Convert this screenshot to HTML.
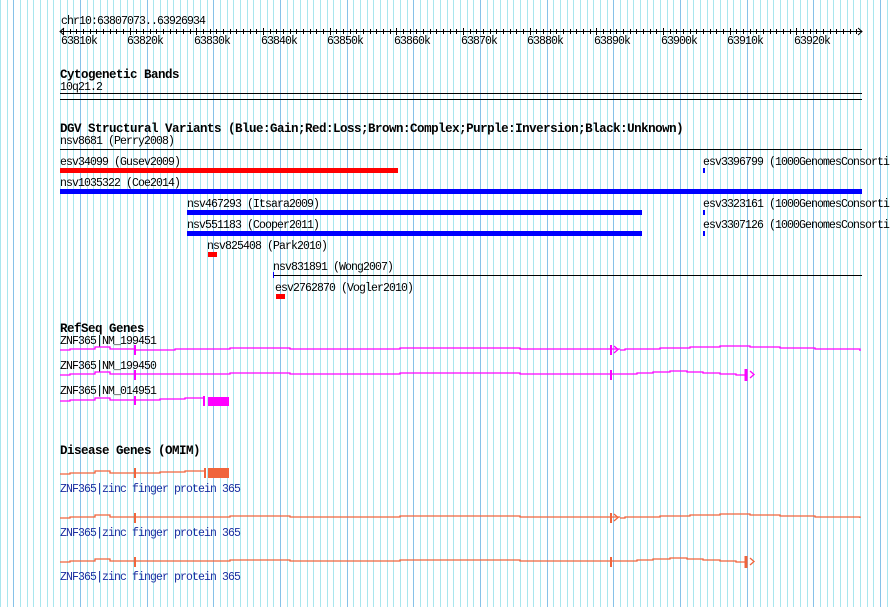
<!DOCTYPE html>
<html><head><meta charset="utf-8"><style>
html,body{margin:0;padding:0;background:#fff;}
#c{position:relative;width:890px;height:607px;overflow:hidden;background:#fff;}
svg{position:absolute;left:0;top:0}
text{font-family:"Liberation Mono",monospace;font-size:11.5px;letter-spacing:-0.9px;fill:#000}
.b{font-weight:bold;font-size:12.5px;letter-spacing:-0.5px}
.z{fill:#1a2ea0}
</style></head><body><div id="c">
<svg width="890" height="607" xmlns="http://www.w3.org/2000/svg">
<defs>
<pattern id="g" x="80" y="0" width="200" height="607" patternUnits="userSpaceOnUse">
<path fill="none" stroke="#a8e6ee" stroke-width="1" d="M7.5 0V607M13.5 0V607M20.5 0V607M27.5 0V607M33.5 0V607M40.5 0V607M47.5 0V607M53.5 0V607M60.5 0V607M73.5 0V607M80.5 0V607M87.5 0V607M93.5 0V607M100.5 0V607M107.5 0V607M113.5 0V607M120.5 0V607M127.5 0V607M140.5 0V607M147.5 0V607M153.5 0V607M160.5 0V607M167.5 0V607M173.5 0V607M180.5 0V607M187.5 0V607M193.5 0V607"/>
<path fill="none" stroke="#86c2e8" stroke-width="1" d="M0.5 0V607M67.5 0V607M133.5 0V607"/>
</pattern>
</defs>
<rect x="0" y="0" width="890" height="607" fill="url(#g)"/>

<text x="61" y="24">chr10:63807073..63926934</text>
<line x1="60" y1="31.5" x2="862" y2="31.5" stroke="#000"/>
<path d="M64 28 L60 31.5 L64 35 M858 28 L862 31.5 L858 35" stroke="#000" fill="none"/>
<g>
<text x="61" y="44">63810k</text><text x="127" y="44">63820k</text><text x="194" y="44">63830k</text><text x="261" y="44">63840k</text><text x="327" y="44">63850k</text><text x="394" y="44">63860k</text><text x="461" y="44">63870k</text><text x="527" y="44">63880k</text><text x="594" y="44">63890k</text><text x="661" y="44">63900k</text><text x="727" y="44">63910k</text><text x="794" y="44">63920k</text>
</g>

<text class="b" x="60" y="78">Cytogenetic Bands</text>
<text x="60" y="90">10q21.2</text>
<line x1="60" y1="93.5" x2="862" y2="93.5" stroke="#000"/>
<line x1="60" y1="99.5" x2="862" y2="99.5" stroke="#000"/>

<text class="b" x="60" y="132">DGV Structural Variants (Blue:Gain;Red:Loss;Brown:Complex;Purple:Inversion;Black:Unknown)</text>
<text x="60" y="144">nsv8681 (Perry2008)</text>
<line x1="60" y1="149.5" x2="862" y2="149.5" stroke="#000"/>
<text x="60" y="165">esv34099 (Gusev2009)</text>
<rect x="60" y="168" width="338" height="5" fill="#f00"/>
<text x="703" y="165">esv3396799 (1000GenomesConsortium)</text>
<rect x="703" y="168" width="2" height="5" fill="#00f"/>
<text x="60" y="186">nsv1035322 (Coe2014)</text>
<rect x="60" y="189" width="802" height="5" fill="#00f"/>
<text x="187" y="207">nsv467293 (Itsara2009)</text>
<rect x="187" y="210" width="455" height="5" fill="#00f"/>
<text x="703" y="207">esv3323161 (1000GenomesConsortium)</text>
<rect x="703" y="210" width="2" height="5" fill="#00f"/>
<text x="187" y="228">nsv551183 (Cooper2011)</text>
<rect x="187" y="231" width="455" height="5" fill="#00f"/>
<text x="703" y="228">esv3307126 (1000GenomesConsortium)</text>
<rect x="703" y="231" width="2" height="5" fill="#00f"/>
<text x="207" y="249">nsv825408 (Park2010)</text>
<rect x="208" y="252" width="9" height="5" fill="#f00"/>
<text x="273" y="270">nsv831891 (Wong2007)</text>
<line x1="273" y1="275.5" x2="862" y2="275.5" stroke="#000"/>
<line x1="273.5" y1="272" x2="273.5" y2="278" stroke="#00f"/>
<text x="275" y="291">esv2762870 (Vogler2010)</text>
<rect x="276" y="294" width="9" height="5" fill="#f00"/>

<text class="b" x="60" y="332">RefSeq Genes</text>
<text x="60" y="344">ZNF365|NM_199451</text>
<text x="60" y="369">ZNF365|NM_199450</text>
<text x="60" y="394">ZNF365|NM_014951</text>
<g fill="none" stroke="#f0f" stroke-width="1.3">
<path d="M60 350 H70 V349 H95 V347 H110 V349 H135 M135 350 H175 V349 H230 V348 H290 V349 H400 V348 H520 V349 H610 H620 M620 350 H625 V349 H660 V348 H690 V347 H720 V346 H750 V347 H780 V348 H815 V349 H860 V351"/>
<path d="M135 345 V355 M611 345 V355" stroke-width="2"/>
<path d="M614 346 L618 349.5 L614 353"/>
<path d="M60 375 H70 V374 H95 V372 H110 V374 H135 H175 V374 H230 V373 H290 V374 H400 V373 H520 V374 H610 H620 V374 H637 V373 H653 V372 H670 V371 H687 V372 H703 V373 H720 V374 H736 V375 H746"/>
<path d="M135 370 V380 M611 370 V380" stroke-width="2"/>
<path d="M746 369 V381" stroke-width="3"/>
<path d="M750 371 L754 374.5 L750 378"/>
<path d="M60 401 H70 V400 H95 V398 H110 V400 H135 H160 V399 H185 V398 H205"/>
<path d="M135 396 V405 M204 396 V406" stroke-width="2"/>
</g>
<rect x="208" y="397" width="21" height="9" fill="#f0f"/>

<text class="b" x="60" y="454">Disease Genes (OMIM)</text>
<g fill="none" stroke="#f0643c" stroke-width="1.3">
<path d="M60 474 H70 V473 H95 V471 H110 V473 H135 H160 V472 H185 V471 H205"/>
<path d="M135 468 V478 M205 468 V478" stroke-width="2"/>
<path d="M60 518 H70 V517 H95 V515 H110 V517 H135 H175 V517 H230 V516 H290 V517 H400 V516 H520 V517 H610 H620 M620 518 H625 V517 H660 V516 H690 V515 H720 V514 H750 V515 H780 V516 H815 V517 H860 V518"/>
<path d="M135 513 V523 M611 513 V523" stroke-width="2"/>
<path d="M614 514 L618 517.5 L614 521"/>
<path d="M60 562 H70 V561 H95 V559 H110 V561 H135 H175 V561 H230 V560 H290 V561 H400 V560 H520 V561 H610 H620 V561 H637 V560 H653 V559 H670 V558 H687 V559 H703 V560 H720 V561 H736 V562 H746"/>
<path d="M135 557 V567 M611 557 V567" stroke-width="2"/>
<path d="M746 556 V568" stroke-width="3"/>
<path d="M750 558 L754 561.5 L750 565"/>
</g>
<rect x="208" y="468" width="21" height="10" fill="#f0643c"/>
<text class="z" x="60" y="492">ZNF365|zinc finger protein 365</text>
<text class="z" x="60" y="536">ZNF365|zinc finger protein 365</text>
<text class="z" x="60" y="580">ZNF365|zinc finger protein 365</text>

<g stroke="#000">
<path d="M63.5 28V35M130.5 28V35M196.5 28V35M263.5 28V35M330.5 28V35M396.5 28V35M463.5 28V35M530.5 28V35M596.5 28V35M663.5 28V35M730.5 28V35M796.5 28V35M70.5 29V34M76.5 29V34M83.5 29V34M90.5 29V34M96.5 29V34M103.5 29V34M110.5 29V34M116.5 29V34M123.5 29V34M136.5 29V34M143.5 29V34M150.5 29V34M156.5 29V34M163.5 29V34M170.5 29V34M176.5 29V34M183.5 29V34M190.5 29V34M203.5 29V34M210.5 29V34M216.5 29V34M223.5 29V34M230.5 29V34M236.5 29V34M243.5 29V34M250.5 29V34M256.5 29V34M270.5 29V34M276.5 29V34M283.5 29V34M290.5 29V34M296.5 29V34M303.5 29V34M310.5 29V34M316.5 29V34M323.5 29V34M336.5 29V34M343.5 29V34M350.5 29V34M356.5 29V34M363.5 29V34M370.5 29V34M376.5 29V34M383.5 29V34M390.5 29V34M403.5 29V34M410.5 29V34M416.5 29V34M423.5 29V34M430.5 29V34M436.5 29V34M443.5 29V34M450.5 29V34M456.5 29V34M470.5 29V34M476.5 29V34M483.5 29V34M490.5 29V34M496.5 29V34M503.5 29V34M510.5 29V34M516.5 29V34M523.5 29V34M536.5 29V34M543.5 29V34M550.5 29V34M556.5 29V34M563.5 29V34M570.5 29V34M576.5 29V34M583.5 29V34M590.5 29V34M603.5 29V34M610.5 29V34M616.5 29V34M623.5 29V34M630.5 29V34M636.5 29V34M643.5 29V34M650.5 29V34M656.5 29V34M670.5 29V34M676.5 29V34M683.5 29V34M690.5 29V34M696.5 29V34M703.5 29V34M710.5 29V34M716.5 29V34M723.5 29V34M736.5 29V34M743.5 29V34M750.5 29V34M756.5 29V34M763.5 29V34M770.5 29V34M776.5 29V34M783.5 29V34M790.5 29V34M803.5 29V34M810.5 29V34M816.5 29V34M823.5 29V34M830.5 29V34M836.5 29V34M843.5 29V34M850.5 29V34M856.5 29V34"/>
</g>
</svg>
</div>
</body></html>
